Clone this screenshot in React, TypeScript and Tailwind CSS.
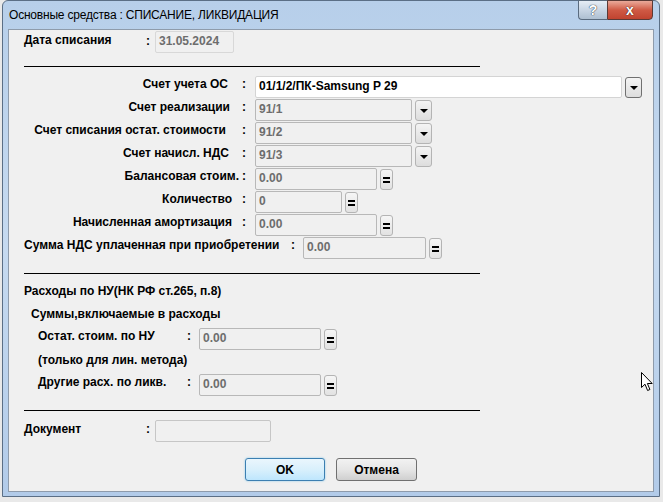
import React from "react";

// Окно "Основные средства : СПИСАНИЕ, ЛИКВИДАЦИЯ" в стиле Windows 7

function Field({
  className,
  value,
  white,
}: {
  className: string;
  value?: string;
  white?: boolean;
}) {
  return (
    <div
      className={
        "h-[22px] flex items-center pl-[3px] pb-[2px] rounded-[2px] border text-[12px] font-bold " +
        (white
          ? "bg-white border-[#d4d4d4] text-black"
          : "bg-[#f0f0f0] border-[#b8b8b8] text-[#6d6d6d]") +
        " " +
        className
      }
    >
      {value}
    </div>
  );
}

function DropBtn({ active }: { active?: boolean }) {
  return (
    <div
      className={
        "w-[17px] h-[21px] rounded-[3px] border flex items-center justify-center pt-[1px] bg-gradient-to-b from-[#f4f4f4] to-[#dddddd] " +
        (active ? "border-[#707070]" : "border-[#b4b4b4]")
      }
    >
      <div className="w-0 h-0 border-l-[4px] border-r-[4px] border-t-[4px] border-l-transparent border-r-transparent border-t-black" />
    </div>
  );
}

function EqBtn() {
  return (
    <div className="w-[13px] h-[21px] rounded-[3px] border border-[#b4b4b4] bg-gradient-to-b from-[#f6f6f6] to-[#e2e2e2] flex flex-col items-center justify-center gap-[2px]">
      <div className="w-[7px] h-[2px] bg-black" />
      <div className="w-[7px] h-[2px] bg-black" />
    </div>
  );
}

function Colon({ className }: { className: string }) {
  return <div className={"pt-[1px] font-bold " + className}>:</div>;
}

export default function App() {
  return (
    <div className="w-[663px] h-[502px] bg-[#e9e9e9] overflow-hidden relative font-['Liberation_Sans',Arial,sans-serif] text-[12px] leading-[14px] text-black">
      {/* окно */}
      <div className="ml-[2px] w-[658px] h-[497px] rounded-t-[6px] border border-[#5b6f86] bg-gradient-to-b from-[#b7cfea] via-[#c6daf0] to-[#b2cbe9] flex flex-col">
        {/* заголовок */}
        <div className="h-[28px] flex justify-between pl-[6px] pr-[6px]">
          <div className="pt-[7px] text-[12px] tracking-[-0.2px] text-black">Основные средства : СПИСАНИЕ, ЛИКВИДАЦИЯ</div>
          <div className="flex -mt-[1px] h-[20px]">
            <div className="w-[29px] h-[20px] rounded-bl-[4px] border border-[#5a6b7e] border-r-0 bg-gradient-to-b from-[#e6edf5] via-[#c9d6e4] to-[#aebfd1] flex items-center justify-center text-white font-bold text-[14px] [text-shadow:0_0_1px_#2a3646,0_0_1px_#2a3646]">
              ?
            </div>
            <div className="w-[46px] h-[20px] rounded-br-[4px] border border-[#5a3a36] bg-gradient-to-b from-[#e9a99a] via-[#cf5a45] to-[#c0432f] flex items-center justify-center text-white font-bold text-[14px] [text-shadow:0_0_1px_#3a1a14,0_0_1px_#3a1a14]">
              x
            </div>
          </div>
        </div>

        {/* содержимое */}
        <div className="mx-[5px] h-[463px] border border-[#8e9bab] bg-[#f0f0f0] flex flex-col pl-[15px]">
          {/* дата */}
          <div className="flex h-[22px] mt-[1px]">
            <div className="w-[122px] pt-[2px] font-bold">Дата списания</div>
            <Colon className="w-[9px] pt-[3px]" />
            <Field className="w-[79px] border-[#d8d8d8]" value="31.05.2024" />
          </div>

          <div className="mt-[13px] h-px w-[456px] bg-black" />

          <div className="mt-[9px] flex flex-col gap-[1px]">
            <div className="flex h-[22px]">
              <div className="w-[216px] pr-[12px] text-right pt-[1px] font-bold">Счет учета ОС</div>
              <Colon className="w-[15px] pl-[2px]" />
              <Field className="w-[367px]" white value="01/1/2/ПК-Samsung P 29" />
              <div className="ml-[3px] mt-[1px]">
                <DropBtn active />
              </div>
            </div>
            <div className="flex h-[22px]">
              <div className="w-[216px] pr-[10px] text-right pt-[1px] font-bold">Счет реализации</div>
              <Colon className="w-[15px] pl-[2px]" />
              <Field className="w-[157px]" value="91/1" />
              <div className="ml-[3px] mt-[1px]">
                <DropBtn />
              </div>
            </div>
            <div className="flex h-[22px]">
              <div className="w-[216px] pr-[14px] text-right pt-[1px] font-bold">Счет списания остат. стоимости</div>
              <Colon className="w-[15px] pl-[2px]" />
              <Field className="w-[157px]" value="91/2" />
              <div className="ml-[3px] mt-[1px]">
                <DropBtn />
              </div>
            </div>
            <div className="flex h-[22px]">
              <div className="w-[216px] pr-[11px] text-right pt-[1px] font-bold">Счет начисл. НДС</div>
              <Colon className="w-[15px] pl-[2px]" />
              <Field className="w-[157px]" value="91/3" />
              <div className="ml-[3px] mt-[1px]">
                <DropBtn />
              </div>
            </div>
            <div className="flex h-[22px]">
              <div className="w-[216px] pr-[1px] text-right pt-[1px] font-bold">Балансовая стоим.</div>
              <Colon className="w-[15px] pl-[2px]" />
              <Field className="w-[122px]" value="0.00" />
              <div className="ml-[3px] mt-[1px]">
                <EqBtn />
              </div>
            </div>
            <div className="flex h-[22px]">
              <div className="w-[216px] pr-[8px] text-right pt-[1px] font-bold">Количество</div>
              <Colon className="w-[15px] pl-[2px]" />
              <Field className="w-[87px]" value="0" />
              <div className="ml-[3px] mt-[1px]">
                <EqBtn />
              </div>
            </div>
            <div className="flex h-[22px]">
              <div className="w-[216px] pr-[8px] text-right pt-[1px] font-bold">Начисленная амортизация</div>
              <Colon className="w-[15px] pl-[2px]" />
              <Field className="w-[122px]" value="0.00" />
              <div className="ml-[3px] mt-[1px]">
                <EqBtn />
              </div>
            </div>
            <div className="flex h-[22px]">
              <div className="w-[264px] pt-[1px] font-bold">Сумма НДС уплаченная при приобретении</div>
              <Colon className="w-[15px] pl-[3px]" />
              <Field className="w-[123px]" value="0.00" />
              <div className="ml-[3px] mt-[1px]">
                <EqBtn />
              </div>
            </div>
          </div>

          <div className="mt-[14px] h-px w-[456px] bg-black" />

          {/* налоговый учет */}
          <div className="mt-[10px] font-bold">Расходы по НУ(НК РФ ст.265, п.8)</div>
          <div className="mt-[9px] pl-[7px] font-bold">Суммы,включаемые в расходы</div>

          <div className="mt-[7px] flex h-[22px] pl-[14px]">
            <div className="w-[148px] pt-[1px] font-bold">Остат. стоим. по НУ</div>
            <Colon className="w-[13px] pl-[1px]" />
            <Field className="w-[122px]" value="0.00" />
            <div className="ml-[3px] mt-[1px]">
              <EqBtn />
            </div>
          </div>
          <div className="mt-[3px] pl-[14px] font-bold">(только для лин. метода)</div>
          <div className="mt-[7px] flex h-[22px] pl-[14px]">
            <div className="w-[148px] pt-[1px] font-bold">Другие расх. по ликв.</div>
            <Colon className="w-[13px] pl-[1px]" />
            <Field className="w-[122px]" value="0.00" />
            <div className="ml-[3px] mt-[1px]">
              <EqBtn />
            </div>
          </div>

          <div className="mt-[14px] h-px w-[456px] bg-black" />

          {/* документ */}
          <div className="mt-[9px] flex h-[22px]">
            <div className="w-[122px] pt-[2px] font-bold">Документ</div>
            <Colon className="w-[9px] pt-[2px]" />
            <Field className="w-[116px] border-[#c6c6c6]" />
          </div>

          {/* кнопки */}
          <div className="mt-[16px] -ml-[15px] flex justify-center gap-[11px]">
            <div className="w-[80px] h-[23px] rounded-[3px] border border-[#3c7fb1] shadow-[0_0_2px_#7dc4ea] bg-gradient-to-b from-[#eaf6fd] via-[#d9f0fc] to-[#bee6fd] flex items-center justify-center text-[12px] font-bold">
              OK
            </div>
            <div className="w-[81px] h-[23px] rounded-[3px] border border-[#707070] bg-gradient-to-b from-[#f2f2f2] via-[#e6e6e6] to-[#cfcfcf] flex items-center justify-center text-[12px] font-bold">
              Отмена
            </div>
          </div>
        </div>
      </div>

      {/* курсор мыши */}
      <svg className="absolute left-[641px] top-[372px]" width="13" height="20" viewBox="0 0 13 20">
        <path d="M0.5 0.5 L0.5 15.5 L4 12.2 L6.6 18.5 L8.9 17.5 L6.4 11.5 L11.2 11.5 Z" fill="#fff" stroke="#000" strokeWidth="1" strokeLinejoin="round" />
      </svg>
    </div>
  );
}
